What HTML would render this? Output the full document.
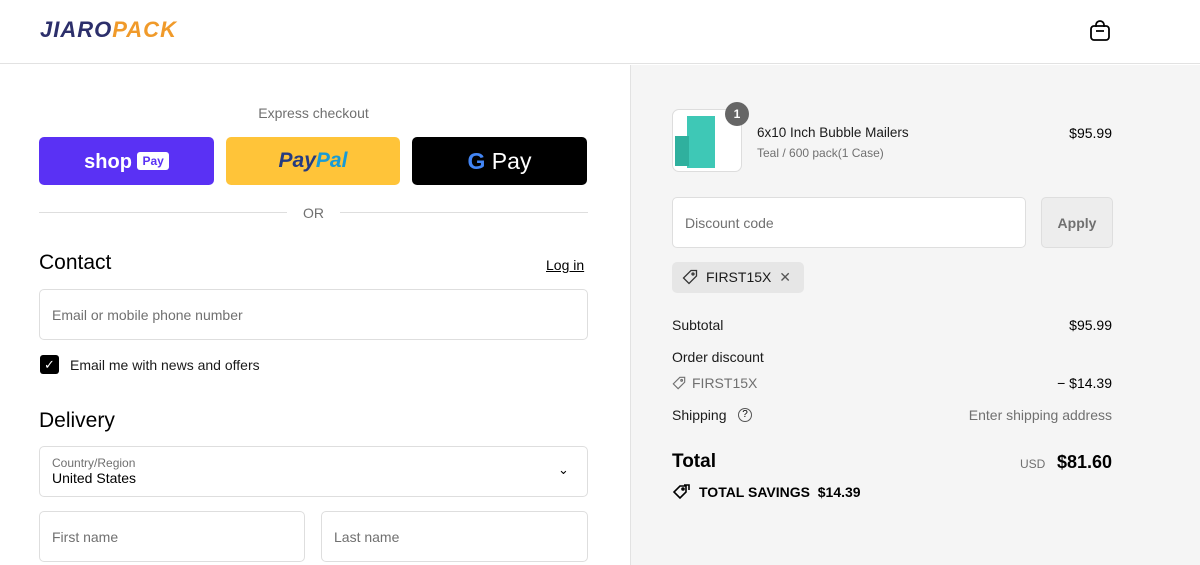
<!DOCTYPE html><html><head><style>
*{box-sizing:border-box;margin:0;padding:0}
body{width:1200px;height:565px;overflow:hidden;font-family:"Liberation Sans",sans-serif;color:#000;background:#fff;position:relative}
.a{position:absolute}
.r{position:absolute;right:88px;text-align:right}
.inp{position:absolute;border:1px solid #dedede;border-radius:5px;background:#fff;font-size:14px;color:#707070}
</style></head><body>
<div class="a" style="left:0;top:0;width:1200px;height:64px;border-bottom:1px solid #e2e2e2"></div>
<div class="a" style="left:40px;top:17px;font-size:22px;font-weight:bold;font-style:italic;letter-spacing:1px"><span style="color:#2c2f6b">JIARO</span><span style="color:#f09a2a">PACK</span></div>
<svg class="a" style="left:1088px;top:19px" width="24" height="24" viewBox="0 0 24 24" fill="none" stroke="#000" stroke-width="1.8"><rect x="3" y="7" width="18" height="14" rx="3"/><path d="M8 8V6a4 4 0 0 1 8 0v2M8 12h8"/></svg>
<div class="a" style="left:630px;top:65px;width:570px;height:500px;background:#f5f5f5;border-left:1px solid #e2e2e2"></div>
<div class="a" style="left:39px;top:105px;width:549px;text-align:center;font-size:14px;color:#707070">Express checkout</div>
<div class="a" style="left:39px;top:137px;width:175px;height:48px;background:#5a31f4;border-radius:5px;color:#fff;font-weight:bold;font-size:20px;text-align:center;line-height:48px">shop <span style="background:#fff;color:#5a31f4;font-size:12px;padding:2px 5px;border-radius:3px;vertical-align:3px">Pay</span></div>
<div class="a" style="left:226px;top:137px;width:174px;height:48px;background:#ffc439;border-radius:5px;font-weight:bold;font-style:italic;font-size:21px;text-align:center;line-height:48px"><span style="color:#253b80">Pay</span><span style="color:#179bd7">Pal</span></div>
<div class="a" style="left:412px;top:137px;width:175px;height:48px;background:#000;border-radius:5px;color:#fff;font-size:23px;text-align:center;line-height:48px"><b style="color:#4285f4">G</b> Pay</div>
<div class="a" style="left:39px;top:212px;width:248px;border-top:1px solid #dedede"></div>
<div class="a" style="left:340px;top:212px;width:248px;border-top:1px solid #dedede"></div>
<div class="a" style="left:303px;top:205px;font-size:14px;color:#707070">OR</div>
<div class="a" style="left:39px;top:251px;font-size:21px">Contact</div>
<div class="a" style="left:546px;top:257px;font-size:14px;text-decoration:underline">Log in</div>
<div class="inp" style="left:39px;top:289px;width:549px;height:51px;padding:17px 12px">Email or mobile phone number</div>
<div class="a" style="left:40px;top:355px;width:19px;height:19px;background:#000;border-radius:3px;color:#fff;font-size:13px;text-align:center;line-height:19px">✓</div>
<div class="a" style="left:70px;top:357px;font-size:14px;color:#1a1a1a">Email me with news and offers</div>
<div class="a" style="left:39px;top:409px;font-size:21px">Delivery</div>
<div class="inp" style="left:39px;top:446px;width:549px;height:51px;padding:9px 12px"><div style="font-size:12px">Country/Region</div><div style="color:#000">United States</div></div>
<div class="a" style="left:558px;top:462px;font-size:13px">⌄</div>
<div class="inp" style="left:39px;top:511px;width:266px;height:51px;padding:17px 12px">First name</div>
<div class="inp" style="left:321px;top:511px;width:267px;height:51px;padding:17px 12px">Last name</div>
<div class="a" style="left:672px;top:109px;width:70px;height:63px;border:1px solid #ddd;border-radius:7px;background:#fff;overflow:hidden"><div style="position:absolute;left:14px;top:6px;width:28px;height:52px;background:#3ec8b6"></div><div style="position:absolute;left:2px;top:26px;width:14px;height:30px;background:#2fb09e"></div></div>
<div class="a" style="left:725px;top:102px;width:24px;height:24px;border-radius:12px;background:#666;color:#fff;font-size:12px;font-weight:bold;text-align:center;line-height:24px">1</div>
<div class="a" style="left:757px;top:125px;font-size:13.5px;color:#1a1a1a">6x10 Inch Bubble Mailers</div>
<div class="a" style="left:757px;top:146px;font-size:12px;color:#707070">Teal / 600 pack(1 Case)</div>
<div class="r" style="top:125px;font-size:14px">$95.99</div>
<div class="inp" style="left:672px;top:197px;width:354px;height:51px;padding:17px 12px">Discount code</div>
<div class="a" style="left:1041px;top:197px;width:72px;height:51px;border:1px solid #dedede;border-radius:5px;background:#ededed;color:#707070;font-size:14px;font-weight:bold;text-align:center;line-height:51px">Apply</div>
<div class="a" style="left:672px;top:262px;width:132px;height:31px;background:#e6e6e6;border-radius:5px;font-size:14px;padding:7px 10px 0 34px;color:#1a1a1a">FIRST15X <span style="margin-left:4px;color:#555">✕</span></div>
<svg class="a" style="left:682px;top:269px" width="16" height="16" viewBox="0 0 16 16" fill="none" stroke="#333" stroke-width="1.3"><path d="M9 1.5h5.5V7L7 14.5 1.5 9z"/><circle cx="11" cy="5" r="1"/></svg>
<div class="a" style="left:672px;top:317px;font-size:14px;color:#1a1a1a">Subtotal</div>
<div class="r" style="top:317px;font-size:14px">$95.99</div>
<div class="a" style="left:672px;top:349px;font-size:14px;color:#1a1a1a">Order discount</div>
<svg class="a" style="left:672px;top:376px" width="14" height="14" viewBox="0 0 16 16" fill="none" stroke="#707070" stroke-width="1.3"><path d="M9 1.5h5.5V7L7 14.5 1.5 9z"/><circle cx="11" cy="5" r="1"/></svg>
<div class="a" style="left:692px;top:375px;font-size:14px;color:#707070">FIRST15X</div>
<div class="r" style="top:375px;font-size:14px">− $14.39</div>
<div class="a" style="left:672px;top:407px;font-size:14px;color:#1a1a1a">Shipping</div>
<div class="a" style="left:738px;top:408px;width:14px;height:14px;border:1.3px solid #555;border-radius:50%;font-size:10px;text-align:center;line-height:12px">?</div>
<div class="r" style="top:407px;font-size:14px;color:#707070">Enter shipping address</div>
<div class="a" style="left:672px;top:451px;font-size:19px;font-weight:bold">Total</div>
<div class="a" style="left:1020px;top:457px;font-size:12px;color:#707070">USD</div>
<div class="r" style="top:452px;font-size:18px;font-weight:bold">$81.60</div>
<svg class="a" style="left:672px;top:484px" width="18" height="16" viewBox="0 0 18 16" fill="none" stroke="#000" stroke-width="1.6"><path d="M8 2h6v6l-6 6-6-6z"/><path d="M12 1h5v5"/><circle cx="11" cy="5" r="1"/></svg>
<div class="a" style="left:699px;top:484px;font-size:14px;font-weight:bold">TOTAL SAVINGS &nbsp;$14.39</div>
</body></html>
